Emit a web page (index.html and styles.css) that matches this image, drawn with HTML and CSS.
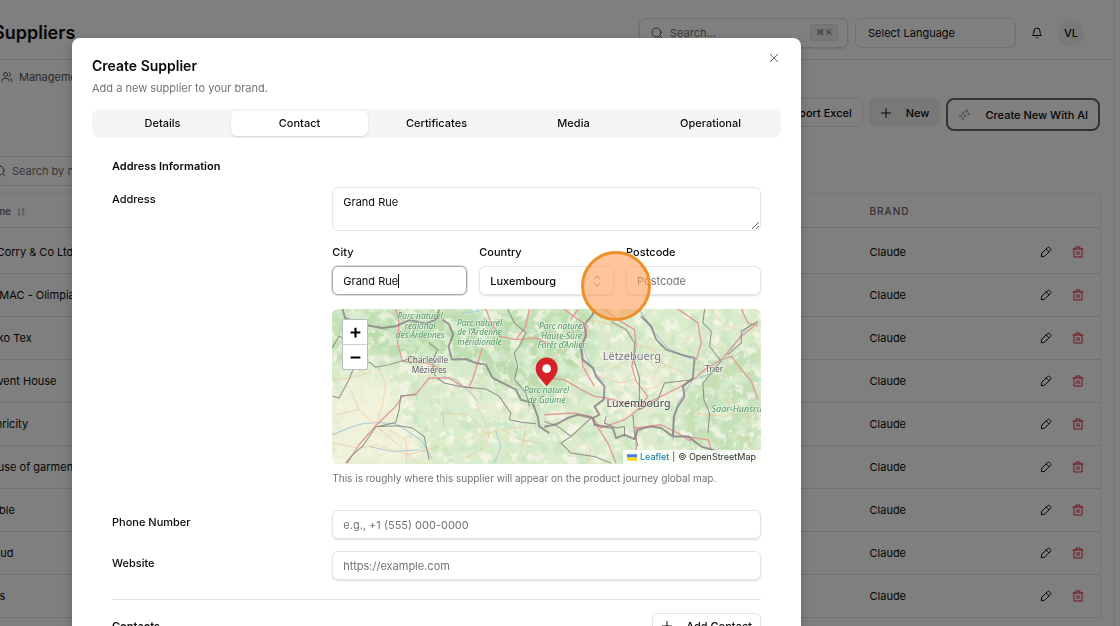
FILE: index.html
```
<!DOCTYPE html>
<html lang="en">
<head>
<meta charset="utf-8">
<title>Create Supplier</title>
<link rel="stylesheet" href="styles.css">
</head>
<body>
<svg class="sprite" aria-hidden="true">
  <symbol id="i-search" viewBox="0 0 24 24"><circle cx="11" cy="11" r="9"/><path d="m22 22-4.500-4.500"/></symbol>
  <symbol id="i-users" viewBox="0 0 24 24"><path d="M16 21v-2a4 4 0 0 0-4-4H6a4 4 0 0 0-4 4v2"/><circle cx="9" cy="7" r="4"/><path d="M22 21v-2a4 4 0 0 0-3-3.87"/><path d="M16 3.13a4 4 0 0 1 0 7.75"/></symbol>
  <symbol id="i-bell" viewBox="0 0 24 24"><path d="M6 8a6 6 0 0 1 12 0c0 7 3 9 3 9H3s3-2 3-9"/><path d="M10.3 21a1.94 1.94 0 0 0 3.4 0"/></symbol>
  <symbol id="i-plus" viewBox="0 0 24 24"><path d="M3 12h18M12 3v18"/></symbol>
  <symbol id="i-x" viewBox="0 0 24 24"><path d="M21 3 3 21M3 3l18 18"/></symbol>
  <symbol id="i-spark" viewBox="0 0 24 24"><path d="M10 6c1 6 2 7 7 8-5 1-6 2-7 8-1-6-2-7-8-8 6-1 7-2 8-8Z"/><path d="M17 1.500c.4 2 1 2.600 3 3-2 .4-2.600 1-3 3-.4-2-1-2.600-3-3 2-.4 2.600-1 3-3ZM21.500 8v3M20 9.500h3"/></symbol>
  <symbol id="i-sort" viewBox="0 0 24 24"><path d="M7 3v17M3 16l4 4 4-4M17 21V4M13 8l4-4 4 4"/></symbol>
  <symbol id="i-pencil" viewBox="0 0 24 24"><path d="M15.500 3a2.500 2.500 0 0 1 3.500 0l2 2a2.500 2.500 0 0 1 0 3.500L9 20.500l-6.500 1 1-6.500Z"/><path d="m12.500 6 5.500 5.500"/></symbol>
  <symbol id="i-trash" viewBox="0 0 24 24"><path d="M2 6h20M4 6v16h16V6M8 6V2h8v4M10 11v6M14 11v6"/></symbol>
  <symbol id="i-updown" viewBox="0 0 24 24"><path d="m6 8 6-6 6 6M6 16l6 6 6-6"/></symbol>
</svg>

<div class="app">
  <header class="topbar">
    <h1 class="page-title">Suppliers</h1>
    <label class="search"><svg class="icon"><use href="#i-search"/></svg><input type="text" placeholder="Search..." aria-label="Search"><kbd>⌘ K</kbd></label>
    <select class="lang" aria-label="Select Language"><option>Select Language</option></select>
    <button class="bell" aria-label="Notifications"><svg class="icon"><use href="#i-bell"/></svg></button>
    <button class="avatar">VL</button>
  </header>
  <nav class="subnav"><a href="#"><svg class="icon"><use href="#i-users"/></svg>Management</a></nav>
  <div class="actions">
    <button class="btn">Export Excel</button>
    <button class="btn soft"><svg class="icon"><use href="#i-plus"/></svg>New</button>
    <button class="btn ai"><svg class="icon"><use href="#i-spark"/></svg>Create New With AI</button>
  </div>
  <label class="filter"><svg class="icon"><use href="#i-search"/></svg><input type="text" placeholder="Search by name" aria-label="Search by name"></label>
  <table class="table">
    <thead><tr><th>Name <svg class="icon"><use href="#i-sort"/></svg></th><th class="brand">BRAND</th><th class="tools"></th></tr></thead>
    <tbody>
      <tr><td>K. Corry &amp; Co Ltd</td><td>Claude</td><td><div class="row-tools"><button aria-label="Edit"><svg class="icon"><use href="#i-pencil"/></svg></button><button class="del" aria-label="Delete"><svg class="icon"><use href="#i-trash"/></svg></button></div></td></tr>
      <tr><td>DOMAC - Olimpias</td><td>Claude</td><td><div class="row-tools"><button aria-label="Edit"><svg class="icon"><use href="#i-pencil"/></svg></button><button class="del" aria-label="Delete"><svg class="icon"><use href="#i-trash"/></svg></button></div></td></tr>
      <tr><td>Oeko Tex</td><td>Claude</td><td><div class="row-tools"><button aria-label="Edit"><svg class="icon"><use href="#i-pencil"/></svg></button><button class="del" aria-label="Delete"><svg class="icon"><use href="#i-trash"/></svg></button></div></td></tr>
      <tr><td>Advent House</td><td>Claude</td><td><div class="row-tools"><button aria-label="Edit"><svg class="icon"><use href="#i-pencil"/></svg></button><button class="del" aria-label="Delete"><svg class="icon"><use href="#i-trash"/></svg></button></div></td></tr>
      <tr><td>Fabricity</td><td>Claude</td><td><div class="row-tools"><button aria-label="Edit"><svg class="icon"><use href="#i-pencil"/></svg></button><button class="del" aria-label="Delete"><svg class="icon"><use href="#i-trash"/></svg></button></div></td></tr>
      <tr><td>House of garments</td><td>Claude</td><td><div class="row-tools"><button aria-label="Edit"><svg class="icon"><use href="#i-pencil"/></svg></button><button class="del" aria-label="Delete"><svg class="icon"><use href="#i-trash"/></svg></button></div></td></tr>
      <tr><td>Mable</td><td>Claude</td><td><div class="row-tools"><button aria-label="Edit"><svg class="icon"><use href="#i-pencil"/></svg></button><button class="del" aria-label="Delete"><svg class="icon"><use href="#i-trash"/></svg></button></div></td></tr>
      <tr><td>Cloud</td><td>Claude</td><td><div class="row-tools"><button aria-label="Edit"><svg class="icon"><use href="#i-pencil"/></svg></button><button class="del" aria-label="Delete"><svg class="icon"><use href="#i-trash"/></svg></button></div></td></tr>
      <tr><td>Mos</td><td>Claude</td><td><div class="row-tools"><button aria-label="Edit"><svg class="icon"><use href="#i-pencil"/></svg></button><button class="del" aria-label="Delete"><svg class="icon"><use href="#i-trash"/></svg></button></div></td></tr>
    </tbody>
  </table>
</div>

<div class="overlay">
  <section class="dialog" role="dialog" aria-labelledby="dlg-title">
    <header class="dialog-head">
      <div>
        <h2 id="dlg-title">Create Supplier</h2>
        <p>Add a new supplier to your brand.</p>
      </div>
      <button class="close" aria-label="Close"><svg class="icon"><use href="#i-x"/></svg></button>
    </header>
    <div class="tabs" role="tablist">
      <button role="tab">Details</button>
      <button role="tab" class="active" aria-selected="true">Contact</button>
      <button role="tab">Certificates</button>
      <button role="tab">Media</button>
      <button role="tab">Operational</button>
    </div>
    <form class="form">
      <h3>Address Information</h3>
      <div class="row">
        <label for="address">Address</label>
        <div class="wide">
          <textarea id="address" spellcheck="false">Grand Rue</textarea>
          <div class="trio">
            <div class="field"><label for="city">City</label><div class="city focused"><input id="city" size="4" value="Grand Rue"><span class="caret"></span></div></div>
            <div class="field"><label for="country">Country</label><div class="select"><select id="country"><option>Luxembourg</option></select><svg class="icon"><use href="#i-updown"/></svg></div></div>
            <div class="field"><label for="postcode">Postcode</label><input id="postcode" placeholder="Postcode"></div>
          </div>
          <div class="map">
            <svg class="map-art" viewBox="0 0 1284 465" preserveAspectRatio="xMidYMid slice">
              <defs>
                <filter id="forest" x="0" y="0" width="100%" height="100%"><feTurbulence type="fractalNoise" baseFrequency="0.02 0.025" numOctaves="5" seed="8"/><feColorMatrix values="0 0 0 0 .68  0 0 0 0 .84  0 0 0 0 .62  9 0 0 0 -4.600"/></filter>
                <filter id="field" x="0" y="0" width="100%" height="100%"><feTurbulence type="fractalNoise" baseFrequency="0.03" numOctaves="4" seed="21"/><feColorMatrix values="0 0 0 0 .95  0 0 0 0 .94  0 0 0 0 .85  0 8 0 0 -4"/></filter>
                <filter id="dark" x="0" y="0" width="100%" height="100%"><feTurbulence type="fractalNoise" baseFrequency="0.03" numOctaves="4" seed="4"/><feColorMatrix values="0 0 0 0 .55  0 0 0 0 .77  0 0 0 0 .52  0 0 9 0 -5.200"/></filter>
                <filter id="soft" x="-20%" y="-20%" width="140%" height="140%"><feGaussianBlur stdDeviation="18"/></filter>
              </defs>
              <rect width="1284" height="465" fill="#dcebc9"/>
              <g filter="url(#soft)">
                <path fill="#bcdcae" d="M0 0H780V150L620 290 480 200 330 140 200 160 110 120 0 180Z"/>
                <path fill="#c5e0b6" d="M1070 160 1284 100V465H1100L1040 360ZM560 250H690V300H560Z"/>
                <path fill="#f0f2da" d="M0 220 170 190 260 340 300 465H0Z"/>
                <path fill="#e9eed4" d="M290 210 560 260 620 340 500 330ZM760 160 1080 190 1040 300 800 330Z"/>
              </g>
              <rect width="1284" height="465" filter="url(#field)" opacity=".7"/>
              <rect width="1284" height="465" filter="url(#forest)" opacity=".75"/>
              <rect width="1284" height="465" filter="url(#dark)" opacity=".6"/>
              <path fill="#f1f2da" opacity=".75" filter="url(#soft)" d="M0 240 170 200 210 330 270 465H0Z"/>
              <g transform="translate(-9 -28)" class="roads">
                <g class="river"><path d="M10 405 60 385 100 372 150 368 200 372 245 400 280 425 310 480M120 440 190 455 270 450M340 230 380 240 420 275 450 310M395 40 450 35M500 395 515 440 495 490M340 330 345 380"/></g>
                <g class="minor"><path d="M12 240 70 235 130 215M60 260 90 330 140 378 230 455 232 490M140 378 160 320 170 250 150 210M10 430 90 445 140 435 235 465 330 440M235 465 230 420 180 390M235 465 270 490M320 200 290 250 240 300M330 340 420 345 470 400 520 390 590 380M420 260 480 400 470 440 400 480M470 400 430 440M520 390 570 420 640 430M540 180 500 130 470 140M590 390 570 470M90 330 20 345"/></g>
                <g class="main"><path d="M200 28 210 70 205 130 220 185 290 190 330 205M55 490 90 435 140 378 200 320 220 290 262 282 300 235 360 235 400 260 430 265M470 28 485 70 510 110 560 120 620 115 658 132M460 145 450 175 430 240 420 260M600 28 590 80 560 120"/></g>
                <g class="rail"><path d="M10 145 30 110 70 130 85 175 60 240 30 295 10 290M85 180 125 190 140 203 180 195 240 178M300 130 325 150 310 185 318 230 M325 235 345 250 400 262 470 268 510 290 530 320 545 340 540 360 580 368 620 372M50 490 70 465 100 440 140 382 200 368 210 330 215 288 262 285M150 380 210 378 250 385 285 410 300 480M535 28 555 70 590 100 570 140 555 160 565 200 556 240 590 280 600 320"/></g>
                <g class="border"><path d="M40 28 48 55 100 75 160 85 200 80 240 62 290 72 320 60 330 30M340 60 360 75 372 105 358 140 368 180 410 178 440 190 470 195 490 235 530 255 560 270 575 300 610 310 625 350 630 380 660 400"/></g>
              </g>
              <g transform="translate(636 -28)" class="roads">
                <g class="river"><path d="M445 240 400 310 390 350 385 420M445 240 500 220 530 180 620 70M110 130 130 180 160 230 180 250M285 30 330 100 370 145 440 180"/></g>
                <g class="minor"><path d="M130 60 200 75 260 100 280 135 240 190 200 210M280 135 330 150 350 190 320 240M350 190 420 220M160 230 230 250 275 240M300 270 340 260 370 230M540 300 590 320 620 380M20 80 60 130 30 180M500 30 530 70 580 90M560 400 610 420 640 450M440 340 540 350 590 330M100 400 140 450 130 490M550 180 540 230 490 260"/></g>
                <g class="main"><path d="M0 235 60 240 110 270 150 290 185 295 280 320 330 300 400 265 445 240 480 210 530 180 560 170 590 210 620 245 640 300M280 330 240 360 170 385 140 350 90 340 0 345M280 330 310 290 275 245 262 200 275 140 270 90 220 60 180 28M400 28 460 70 470 130 455 180M640 70 590 110 540 170M270 385 350 375 400 400 440 425M275 380 275 490M140 350 190 430 215 490M420 410 490 420 510 480M60 30 130 80 110 150 115 200 150 260M590 28 610 70 640 80M100 30 80 60"/></g>
                <g class="rail"><path d="M200 66 245 90 270 130 268 180 285 235 284 330M284 330 340 300 360 250 445 240M480 28 475 70 500 95 495 140 530 185 475 250 478 300 495 340 490 400M640 65 590 95 590 130 550 165M0 365 40 380 80 410 50 430 80 460 150 470 200 490M80 410 140 355M185 350 180 370 215 385 240 380 240 410M265 345 270 400 280 440"/></g>
                <g class="border"><path d="M150 28 145 45 120 75 125 110 110 140 115 180 145 205 155 230 180 260 178 300 150 320 165 345 145 355 100 345 70 355 40 372 0 382M145 355 150 375 205 385 215 415 240 405 270 418 280 390 320 380 350 385 385 410 388 350 400 320 420 290 415 260 445 235 450 175 410 165 365 150 335 120 320 80 290 50M385 410 430 410 470 440 520 455"/></g>
              </g>
              <g transform="translate(-9 -28)">
                <g class="park"><text x="273" y="59">Parc naturel</text><text x="273" y="87">régional</text><text x="273" y="115">des Ardennes</text><text x="451" y="79">Parc naturel</text><text x="451" y="107">de l’Ardenne</text><text x="451" y="136">méridionale</text><text x="697" y="88">Parc naturel</text><text x="697" y="117">Haute-Sûre</text><text x="697" y="145">Forêt d’Anlier</text><text x="652" y="280">Parc naturel</text><text x="652" y="309">de Gaume</text></g>
                <g class="town"><text x="296" y="191">Charleville</text><text x="300" y="221">Mézières</text></g>
              </g>
              <g transform="translate(636 -28)">
                <text class="state" x="262" y="182">Lëtzebuerg</text>
                <text class="capital" x="282" y="322">Luxembourg</text>
                <g class="town"><text x="509" y="216">Trier</text></g>
                <text class="park big" x="589" y="336">Saar-Hunsrück</text>
              </g>
              <path d="M643 232C632 216 610 200 610 179a33 33 0 0 1 66 0C676 200 654 216 643 232Z" fill="#d6202a"/>
              <circle cx="643" cy="179" r="13" fill="#fff"/>
            </svg>
            <div class="zoom"><button type="button" aria-label="Zoom in"><svg class="icon"><use href="#i-plus"/></svg></button><button type="button" aria-label="Zoom out"><svg class="icon" viewBox="0 0 24 24"><path d="M3 12h18"/></svg></button></div>
            <div class="credit"><svg viewBox="0 0 12 8"><path fill="#4c7be1" d="M0 0h12v4H0z"/><path fill="#ffd500" d="M0 4h12v4H0z"/></svg><a href="#">Leaflet</a><span>|</span><span>© OpenStreetMap</span></div>
          </div>
          <p class="hint">This is roughly where this supplier will appear on the product journey global map.</p>
        </div>
      </div>
      <div class="row phone"><label for="phone">Phone Number</label><input class="wide" id="phone" placeholder="e.g., +1 (555) 000-0000"></div>
      <div class="row site"><label for="site">Website</label><input class="wide" id="site" placeholder="https://example.com"></div>
      <div class="contacts"><h3>Contacts</h3><button type="button" class="btn"><svg class="icon"><use href="#i-plus"/></svg>Add Contact</button></div>
    </form>
  </section>
  <span class="pointer"></span>
</div>
</body>
</html>
```

FILE: styles.css
```
* { box-sizing: border-box; }
body { margin: 0; height: 100vh; overflow: hidden; background: #fff; color: #0a0a0a; font: 11px/16px Inter, "Noto Sans", sans-serif; }
h1, h2, h3, p { margin: 0; }
button, input, select, textarea { font: inherit; color: inherit; margin: 0; min-width: 0; }
button { border: 0; padding: 0; background: none; display: flex; align-items: center; justify-content: center; }
input { border: 0; padding: 0; background: none; outline: 0; }
::placeholder { color: #737373; opacity: 1; }
.sprite { position: absolute; width: 0; height: 0; }
.icon { width: 12px; height: 12px; flex: none; fill: none; stroke: currentColor; stroke-width: 2; stroke-linecap: round; stroke-linejoin: round; }

/* page behind the dialog */
.app { margin: 0 5px 0 -17px; height: 100vh; overflow: hidden; border-right: 1px solid #ebebeb; }
.topbar { display: flex; align-items: center; height: 60px; padding: 6px 30px 0 10px; border-bottom: 1px solid #e2e2e2; }
.page-title { flex: 1; font-size: 18px; line-height: 24px; font-weight: 600; }
.search { display: flex; align-items: center; gap: 7px; width: 209px; height: 30px; padding: 0 9px 0 11px; border: 1px solid #dcdcdc; border-radius: 6px; box-shadow: 0 1px 2px #0002; color: #555; }
.search input { flex: 1; }
kbd { padding: 0 5px; border: 1px solid #e4e4e4; border-radius: 3px; background: #efefef; font: 8px/15px Inter, "DejaVu Sans", sans-serif; color: #666; }
.lang { appearance: none; width: 161px; height: 30px; margin-left: 7px; padding: 0 12px; border: 1px solid #e2e2e2; border-radius: 6px; background: #fff; }
.bell { margin: 0 15px; }
.avatar { width: 26px; height: 26px; border-radius: 50%; background: #f2f2f2; font-weight: 500; }
.subnav { padding: 9px 18px 10px; }
.subnav a { display: flex; align-items: center; gap: 6px; color: #555; text-decoration: none; }
.actions { display: flex; justify-content: flex-end; align-items: flex-start; gap: 6px; margin-top: 3px; padding-right: 14px; }
.btn { height: 29px; padding: 0 10px; gap: 14px; border: 1px solid #e2e2e2; border-radius: 6px; background: #fff; font-weight: 500; }
.soft { border-color: #f0f0f0; background: #f0f0f0; }
.ai { height: 33px; border: 2px solid #666; border-radius: 8px; gap: 15px; }
.ai .icon { color: #555; stroke-width: 1; }
.filter { display: flex; align-items: center; gap: 6px; width: 209px; height: 30px; margin-top: 25px; padding: 0 10px; border: 1px solid #dcdcdc; border-radius: 6px; color: #555; }
.table { width: calc(100% - 13px); margin-top: 7px; border-collapse: collapse; table-layout: fixed; border-right: 1px solid #e6e6e6; border-top: 1px solid #f2f2f2; }
.table th, .table td { padding: 0; text-align: left; height: 43px; border-bottom: 1px solid #e0e0e0; }
.table th { height: 34px; font-size: 10px; font-weight: 500; color: #666; }
.table th .icon { width: 10px; height: 10px; vertical-align: middle; color: #999; margin-left: 2px; }
.table .brand { width: 170px; letter-spacing: 1px; }
.table .tools { width: 61px; }
.table tbody tr:first-child td { height: 46px; padding-top: 3px; }
.row-tools { display: flex; gap: 20px; }
.row-tools .del { color: #dc2638; }

/* dialog */
.overlay { position: fixed; inset: 0; padding: 38px 319px 0 72px; background: #00000080; }
.dialog { padding: 20px; border-radius: 8px; background: #fff; box-shadow: 0 4px 12px #0003; min-height: 100%; }
.dialog-head { display: flex; justify-content: space-between; align-items: flex-start; }
.dialog-head h2 { font-size: 14px; line-height: 16px; font-weight: 600; }
.dialog-head p { margin-top: 6px; color: #737373; }
.close { width: 14px; height: 14px; margin-top: -7px; color: #444; }
.close .icon { width: 10px; height: 10px; }
.tabs { display: grid; grid-template-columns: repeat(5, 1fr); height: 29px; margin-top: 13px; padding: 2px; border-radius: 8px; background: #f5f5f5; }
.tabs button { border-radius: 6px; font-weight: 500; padding-bottom: 1px; }
.tabs .active { background: #fff; box-shadow: 0 1px 2px #0002; }
.form { padding: 20px 20px 0; }
.form h3 { font-size: 11px; line-height: 16px; font-weight: 600; }
.form label { font-weight: 500; }
.row { display: grid; grid-template-columns: repeat(3, 1fr); column-gap: 12px; margin-top: 13px; }
.row > label { padding-top: 4px; }
.wide { grid-column: span 2; }
.form textarea { display: block; width: 100%; height: 44px; padding: 6px 10px; border: 1px solid #e5e5e5; border-radius: 6px; outline: 0; resize: vertical; background: #fff; }
.form > .row > input, .field > input, .select, .city { width: 100%; height: 29px; padding: 0 10px; border: 1px solid #e5e5e5; border-radius: 6px; background: #fff; box-shadow: 0 1px 2px #0002; }
.trio { display: grid; grid-template-columns: repeat(3, 1fr); gap: 12px; margin-top: 13px; }
.field { display: grid; gap: 6px; }
.city, .select { display: flex; align-items: center; }
.trio .focused { border-color: #aaa; box-shadow: 0 0 0 1px #ddd; }
.city input { field-sizing: content; }
.caret { width: 1px; height: 14px; background: #111; }
.select select { flex: 1; appearance: none; border: 0; padding: 0; background: none; font-weight: 500; outline: 0; }
.select .icon { color: #888; }
.map { position: relative; margin-top: 14px; height: 155px; border-radius: 6px; overflow: hidden; }
.map-art { display: block; width: 100%; height: 100%; }
.roads path { fill: none; stroke-linejoin: round; }
.river path { stroke: #a9cbdc; stroke-width: 3; }
.minor path { stroke: #f3c49e; stroke-width: 2; }
.main path { stroke: #e29a98; stroke-width: 4; }
.rail path { stroke: #8c8f88; stroke-width: 3; }
.border path { stroke: #807a80; stroke-width: 6; opacity: .75; }
.map text { text-anchor: middle; font-family: "Noto Sans", sans-serif; paint-order: stroke; stroke: #ffffff80; stroke-width: 4px; }
.park, .park text { font-size: 25px; font-style: italic; fill: #4f9560; }
.map .big { font-size: 27px; }
.town { font-size: 25px; fill: #5c5462; }
.state { font-size: 33px; fill: #84708c; }
.capital { font-size: 32px; fill: #444; }
.zoom { position: absolute; left: 10px; top: 10px; width: 26px; border: 1px solid #bbb; border-radius: 2px; background: #fff; overflow: hidden; }
.zoom button { width: 100%; height: 24px; color: #000; }
.zoom button + button { height: 25px; border-top: 1px solid #ccc; }
.zoom .icon { width: 13px; height: 13px; stroke-width: 4; stroke-linecap: butt; }
.credit { position: absolute; right: 0; bottom: 0; display: flex; align-items: center; gap: 3px; padding: 0 5px 0 4px; background: #ffffffcc; color: #333; font-size: 9px; line-height: 14px; }
.credit svg { width: 10px; height: 7px; }
.credit a { color: #0078a8; text-decoration: none; }
.hint { margin-top: 6px; font-size: 10px; line-height: 16px; color: #737373; }
.phone { margin-top: 24px; }
.site { margin-top: 12px; }
.contacts { display: flex; justify-content: space-between; align-items: center; margin-top: 19px; padding-top: 13px; border-top: 1px solid #e5e5e5; }
.contacts .btn { height: 26px; padding: 0 8px; gap: 13px; }
.pointer { position: absolute; left: 581px; top: 251px; width: 70px; height: 70px; border: 3px solid #ee8f27; border-radius: 50%; background: #ff9d5699; pointer-events: none; }
```
